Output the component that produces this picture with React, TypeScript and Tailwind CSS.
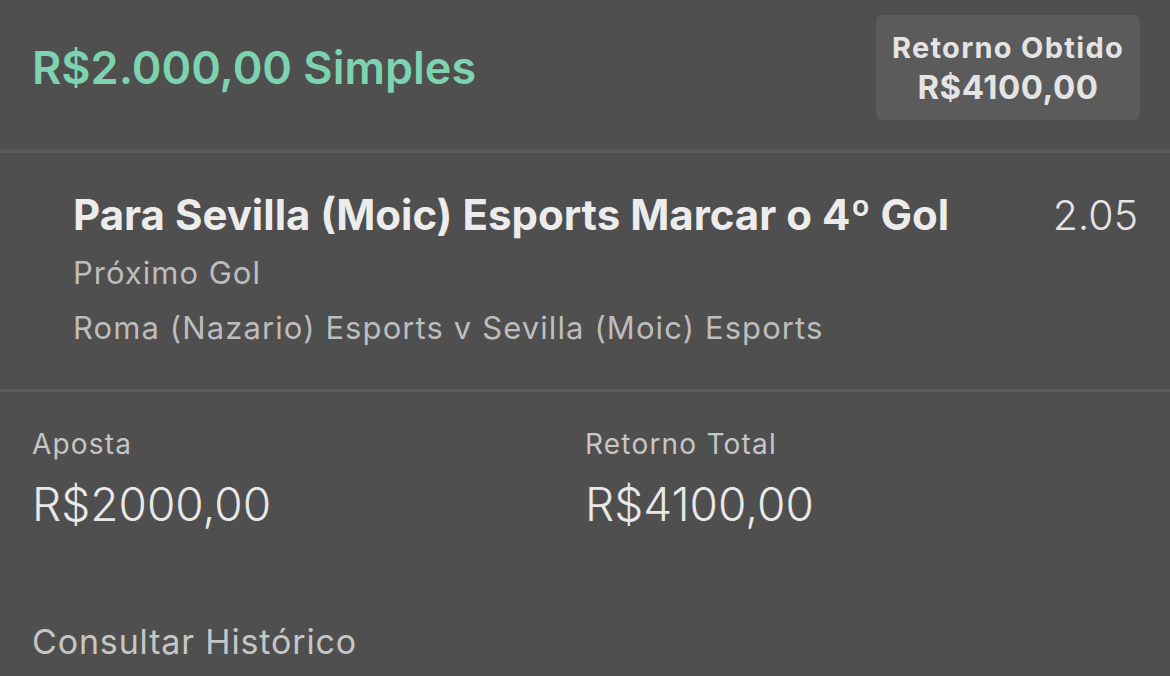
export default function App() {
  return (
    <div
      className="h-[676px] w-full overflow-hidden bg-[#4f4f4f]"
      style={{ fontFamily: "Inter, Roboto, 'Noto Sans', sans-serif" }}
    >
      {/* header */}
      <div className="flex items-center justify-between pl-[32px] pr-[30px] pt-[15px] pb-[30px]">
        <h1 className="text-[45px] font-semibold leading-none text-[#7dd3b0]">R$2.000,00 Simples</h1>
        <div className="flex h-[105px] w-[264px] flex-col items-center justify-center rounded-[6px] bg-[#5b5b5b] font-bold text-[#e4e4e4]">
          <span className="text-[29px] leading-[36px] tracking-[1.3px]">Retorno Obtido</span>
          <span className="mt-[2px] text-[33px] leading-[38px] tracking-[0.5px]">R$4100,00</span>
        </div>
      </div>
      <div className="h-[3px] bg-[#5b5b5b]" />

      {/* selection */}
      <div className="flex justify-between pl-[73px] pr-[32px] pt-[38px] pb-[37px]">
        <div className="flex flex-col">
          <span className="text-[42px] font-bold leading-[48px] text-[#ececec]">
            Para Sevilla (Moic) Esports Marcar o 4º Gol
          </span>
          <span className="mt-[10px] text-[31px] leading-[48px] tracking-[1px] text-[#bdbdbd]">Próximo Gol</span>
          <span className="mt-[7px] text-[31px] leading-[48px] tracking-[1.1px] text-[#bdbdbd]">
            Roma (Nazario) Esports v Sevilla (Moic) Esports
          </span>
        </div>
        <span className="text-[41px] font-light leading-[48px] text-[#e4e4e4]">2.05</span>
      </div>
      <div className="h-[3px] bg-[#5b5b5b]" />

      {/* stake */}
      <div className="grid grid-cols-2 px-[32px] pt-[36px]">
        <div className="flex flex-col">
          <span className="text-[28px] leading-[32px] tracking-[1.2px] text-[#c6c6c6]">Aposta</span>
          <span className="mt-[16px] text-[46px] font-light leading-[56px] text-[#e8e8e8]">R$2000,00</span>
        </div>
        <div className="flex flex-col">
          <span className="text-[28px] leading-[32px] tracking-[1.2px] text-[#c6c6c6]">Retorno Total</span>
          <span className="mt-[16px] text-[46px] font-light leading-[56px] text-[#e8e8e8]">R$4100,00</span>
        </div>
      </div>
      <div className="px-[32px] pt-[88px]">
        <span className="text-[34px] leading-[44px] tracking-[0.85px] text-[#c6c6c6]">Consultar Histórico</span>
      </div>
    </div>
  );
}
